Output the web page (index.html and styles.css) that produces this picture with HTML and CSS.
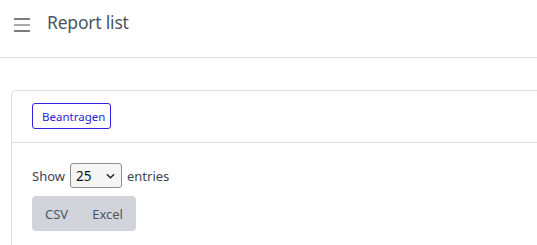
FILE: index.html
```html
<!DOCTYPE html>
<html>
<head>
<meta charset="utf-8">
<link rel="stylesheet" href="styles.css">
</head>
<body>
<header class="topbar">
  <span class="burger" aria-hidden="true"><i></i><i></i><i></i></span>
  <h1 class="title">Report list</h1>
</header>
<main class="content">
  <section class="card">
    <div class="card-head">
      <button class="btn-outline">Beantragen</button>
    </div>
    <div class="card-body">
      <label class="length">Show
        <span class="select"><span class="select-val">25</span>
          <svg class="chev" viewBox="0 0 10 6" width="9" height="6"><path d="M1 1l4 4 4-4" fill="none" stroke="#222" stroke-width="1.5"/></svg>
        </span>
        entries</label>
      <div class="btn-group">
        <button class="btn-gray">CSV</button><button class="btn-gray">Excel</button>
      </div>
    </div>
  </section>
</main>
</body>
</html>
```
FILE: styles.css
```css
html, body { margin: 0; padding: 0; background: #fff; overflow: hidden; }
body { font-family: "Noto Sans", "Open Sans", sans-serif; color: #374151; width: 537px; height: 245px; }
.topbar {
  height: 58px; border-bottom: 1px solid #dcdcdc; box-sizing: border-box;
  display: flex; align-items: flex-start; padding-left: 14px;
}
.burger { display: flex; flex-direction: column; gap: 4px; width: 16px; margin-top: 18px; }
.burger i { display: block; height: 2px; background: #7b7b80; }
.burger i:nth-child(2) { background: #a9a9ae; height: 1.5px; }
.title { margin: 9px 0 0 17px; font-weight: 400; font-size: 17.5px; line-height: 26px; color: #4a5568; letter-spacing: -0.2px; }
.content { padding: 32px 0 0 11px; height: 155px; overflow: hidden; }
.card {
  width: calc(100% + 10px); border: 1px solid #dedede; border-radius: 5px; height: 200px;
}
.card-head { padding: 12px 20px 13px; border-bottom: 1px solid #dedede; }
.btn-outline {
  font-family: inherit; font-size: 11.5px; color: #2a1de0; background: #fff;
  border: 1px solid #3021e0; border-radius: 3px; height: 26px; padding: 0 9px; width: 79px;
}
.card-body { padding: 20px 20px; }
.length { display: flex; align-items: center; font-size: 13px; color: #3d4451; gap: 5px; }
.select {
  display: inline-flex; align-items: center; justify-content: space-between;
  width: 52px; height: 25px; box-sizing: border-box; border: 1px solid #8f8f8f; border-radius: 3px;
  padding: 0 6px 0 5px; background: #f5f5f5; color: #111; font-size: 13.5px;
}
.chev { display: block; }
.btn-group { display: inline-flex; margin-top: 8px; background: #d1d5db; border-radius: 4px; }
.btn-gray {
  font-family: inherit; font-size: 13px; color: #4b5563; background: transparent; border: 0;
  height: 35px; padding: 0 12px 0 13px;
}
.btn-gray + .btn-gray { padding-left: 12px; padding-right: 13px; }
```
